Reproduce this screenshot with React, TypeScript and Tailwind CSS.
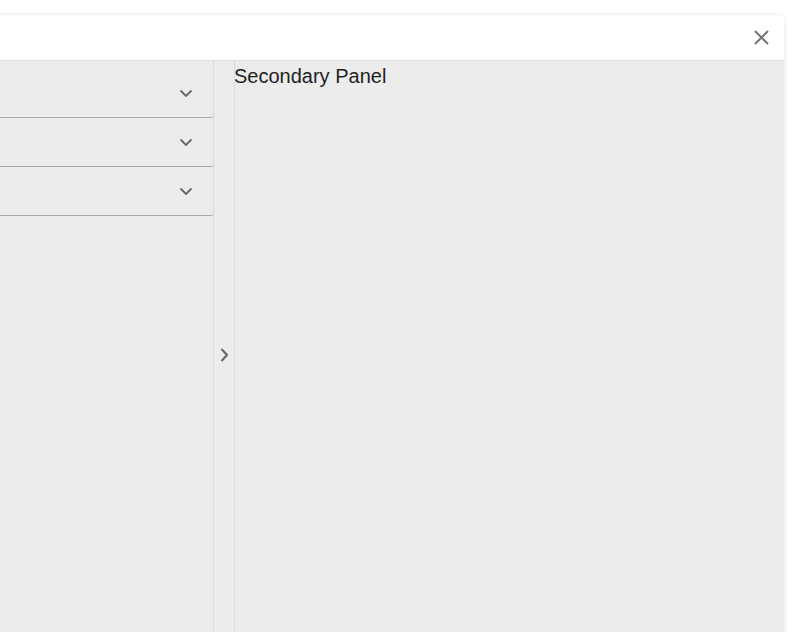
import React from 'react';

const rows = ['one', 'two', 'three'];

function ChevronDown() {
  return (
    <svg width="14" height="9" viewBox="0 0 14 9" fill="none" stroke="#666" strokeWidth="1.8">
      <path d="M1.5 1.5 L7 7 L12.5 1.5" />
    </svg>
  );
}

export default function App() {
  return (
    <div className="min-h-screen bg-white pt-[15px] overflow-hidden" style={{ fontFamily: '"Liberation Sans", Arial, sans-serif' }}>
      <div className="ml-[-16px] w-[800px] rounded-tr-[5px] bg-white shadow-[0_0_4px_rgba(0,0,0,0.12)]">
        {/* header */}
        <div className="h-[46px] flex items-center justify-end pr-[15px] border-b border-[#dcdcdc] rounded-tr-[5px]">
          <button className="w-[16px] h-[16px] flex items-center justify-center">
            <svg width="15" height="15" viewBox="0 0 15 15" fill="none" stroke="#767676" strokeWidth="2">
              <path d="M1 1 L14 14 M14 1 L1 14" />
            </svg>
          </button>
        </div>

        {/* body */}
        <div className="flex bg-[#ececec] h-[588px]">
          <div className="w-[230px] pt-[8px] border-r border-[#dadada]">
            {rows.map((r) => (
              <div key={r} className="h-[49px] flex items-center justify-end pr-[20px] border-b border-[#a9a9a9] rounded-br-[2px]">
                <ChevronDown />
              </div>
            ))}
          </div>
          <div className="w-[21px] flex items-center justify-center border-r border-[#dadada] rounded-tl-[3px]">
            <svg width="8" height="14" viewBox="0 0 8 14" fill="none" stroke="#666" strokeWidth="2">
              <path d="M1.5 1 L7 7 L1.5 13" />
            </svg>
          </div>
          <div className="flex-1">
            <div className="pt-px -ml-px text-xl leading-7 text-[#1f1f1f]">Secondary Panel</div>
          </div>
        </div>
      </div>
    </div>
  );
}
